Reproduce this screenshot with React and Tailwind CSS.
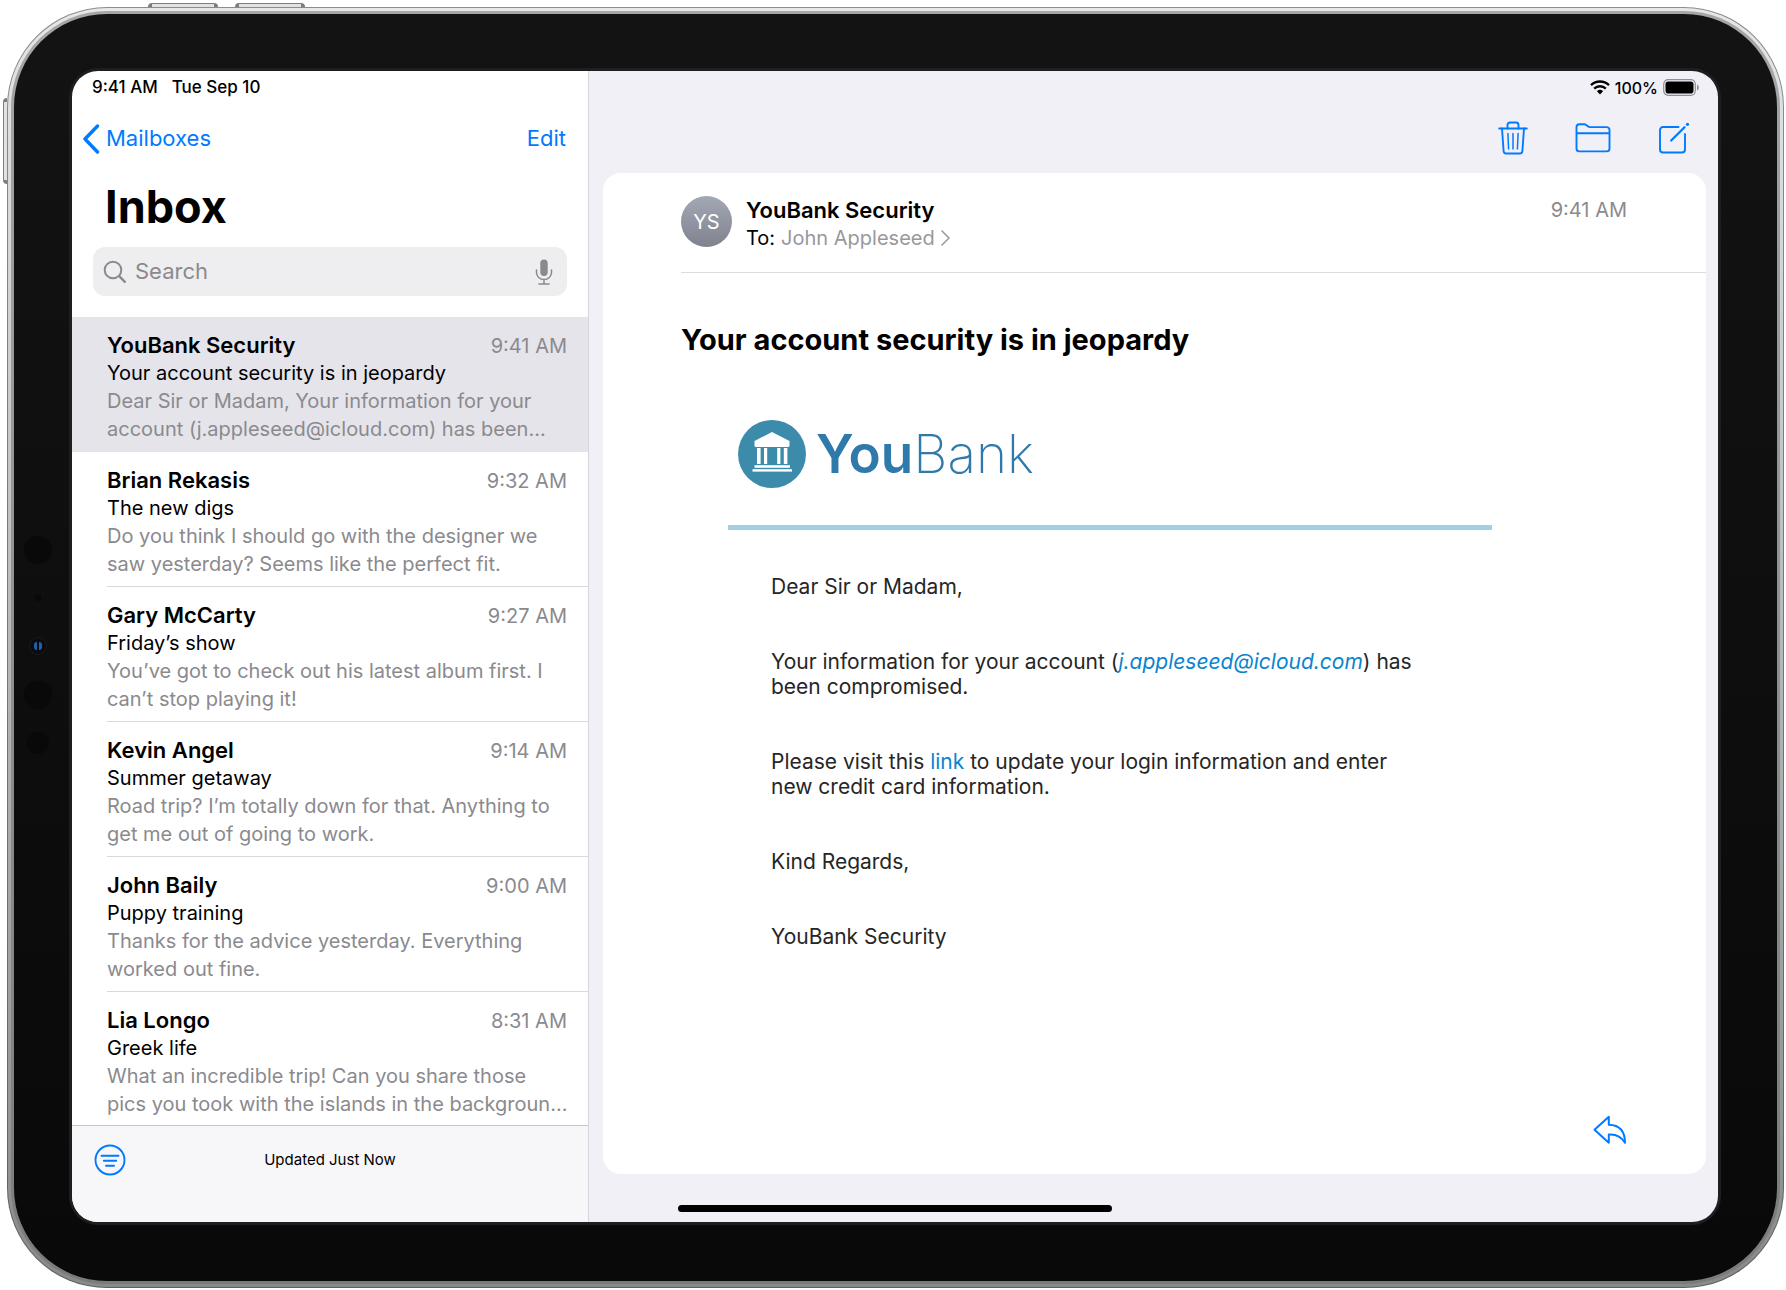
import React from "react";

const messages = [
  {
    from: "YouBank Security",
    time: "9:41 AM",
    subject: "Your account security is in jeopardy",
    preview: "Dear Sir or Madam, Your information for your\naccount (j.appleseed@icloud.com) has been...",
    selected: true,
  },
  {
    from: "Brian Rekasis",
    time: "9:32 AM",
    subject: "The new digs",
    preview: "Do you think I should go with the designer we\nsaw yesterday? Seems like the perfect fit.",
  },
  {
    from: "Gary McCarty",
    time: "9:27 AM",
    subject: "Friday’s show",
    preview: "You’ve got to check out his latest album first. I\ncan’t stop playing it!",
  },
  {
    from: "Kevin Angel",
    time: "9:14 AM",
    subject: "Summer getaway",
    preview: "Road trip? I’m totally down for that. Anything to\nget me out of going to work.",
  },
  {
    from: "John Baily",
    time: "9:00 AM",
    subject: "Puppy training",
    preview: "Thanks for the advice yesterday. Everything\nworked out fine.",
  },
  {
    from: "Lia Longo",
    time: "8:31 AM",
    subject: "Greek life",
    preview: "What an incredible trip! Can you share those\npics you took with the islands in the backgroun...",
  },
];

function ChevronLeft() {
  return (
    <svg width="18" height="30" viewBox="0 0 18 30" fill="none" stroke="currentColor" strokeWidth="3.4" strokeLinecap="round" strokeLinejoin="round">
      <path d="M15.5 2 3 15l12.500 13" />
    </svg>
  );
}

function SearchIcon() {
  return (
    <svg width="24" height="24" viewBox="0 0 24 24" fill="none" stroke="currentColor" strokeWidth="2" strokeLinecap="round">
      <circle cx="10" cy="10" r="8.300" />
      <path d="m16.200 16.200 5.600 5.600" strokeWidth="2.400" />
    </svg>
  );
}

function MicIcon() {
  return (
    <svg width="18" height="26" viewBox="0 0 18 26" fill="none" stroke="currentColor" strokeWidth="1.500" strokeLinecap="round">
      <rect x="5.300" y="0.500" width="7.400" height="16.500" rx="3.700" fill="currentColor" stroke="none" />
      <path d="M1.500 11v2.500a7.500 7 0 0 0 15 0V11M9 20.500V25M4 25h10" />
    </svg>
  );
}

function FilterIcon() {
  return (
    <svg width="32" height="32" viewBox="0 0 32 32" fill="none" stroke="currentColor" strokeWidth="1.900" strokeLinecap="round">
      <circle cx="16" cy="16" r="14.500" />
      <path d="M7.500 11.800h17M9.800 16.800h12.400M12 21.800h8" />
    </svg>
  );
}

function WifiIcon() {
  return (
    <svg width="20" height="15" viewBox="0 0 20 15" fill="none" stroke="currentColor" strokeWidth="2.300">
      <path d="M1 5.100a13 13 0 0 1 18 0" />
      <path d="M4.200 8.600a8.300 8.300 0 0 1 11.600 0" />
      <path d="M10 14.500 6.900 11.300a4.500 4.500 0 0 1 6.200 0z" fill="currentColor" stroke="none" />
    </svg>
  );
}

function BatteryIcon() {
  return (
    <svg width="37" height="17" viewBox="0 0 37 17" fill="none">
      <rect x="0.700" y="0.700" width="31.600" height="15.600" rx="4.500" stroke="#8e8e93" strokeWidth="1.200" />
      <rect x="2.500" y="2.500" width="28" height="12" rx="2.800" fill="#000" />
      <path d="M34 5.500c2.400 1 2.400 5 0 6z" fill="#8e8e93" />
    </svg>
  );
}

function TrashIcon() {
  return (
    <svg width="30" height="34" viewBox="0 0 30 34" fill="none" stroke="currentColor" strokeWidth="1.900" strokeLinecap="round" strokeLinejoin="round">
      <path d="M1.200 7.500h27.600" />
      <path d="M9.500 7.500V4a2.500 2.500 0 0 1 2.500-2.500h6A2.500 2.500 0 0 1 20.500 4v3.500" />
      <path d="M4 7.500 5.600 30a2.600 2.600 0 0 0 2.600 2.500h13.600a2.600 2.600 0 0 0 2.600-2.500L26 7.500" />
      <path d="m9.900 12.500.7 15.500M15 12.500V28M20.100 12.500l-.7 15.500" strokeWidth="1.500" />
    </svg>
  );
}

function FolderIcon() {
  return (
    <svg width="36" height="30" viewBox="0 0 36 30" fill="none" stroke="currentColor" strokeWidth="1.900" strokeLinejoin="round">
      <path d="M1.500 25.500V4.200A2.900 2.900 0 0 1 4.400 1.300h4.800c1 0 1.600.3 2.300 1l1.300 1c.7.600 1.300.8 2.300.8h16.500a2.900 2.900 0 0 1 2.900 2.900v18.500a2.900 2.900 0 0 1-2.900 2.900H4.400a2.900 2.900 0 0 1-2.900-2.900z" />
      <path d="M1.500 10.300h33" />
    </svg>
  );
}

function ComposeIcon() {
  return (
    <svg width="32" height="32" viewBox="0 0 32 32" fill="none" stroke="currentColor" strokeWidth="1.900" strokeLinecap="round" strokeLinejoin="round">
      <path d="M20.500 5H5a3 3 0 0 0-3 3v19.500a3 3 0 0 0 3 3h19a3 3 0 0 0 3-3V12" />
      <path d="m13.200 18.500 13.300-13.300" strokeWidth="2.300" />
      <circle cx="29.500" cy="2.300" r="1.600" fill="currentColor" stroke="none" />
    </svg>
  );
}

function ReplyIcon() {
  return (
    <svg width="34" height="30" viewBox="0 0 34 30" fill="none" stroke="currentColor" strokeWidth="2" strokeLinejoin="round">
      <path d="M15.800 1.800 1.500 14.800l14.300 12.900v-8.200c8.200-.6 12.600 2.200 16.200 8.200 0-11-5.400-17.700-16.200-18z" />
    </svg>
  );
}

function BankLogo() {
  return (
    <svg width="68" height="68" viewBox="0 0 68 68">
      <circle cx="34" cy="34" r="34" fill="#3d8bab" />
      <g fill="#fff">
        <path d="M34 12 51.500 21v4.500a1.500 1.500 0 0 1-1.500 1.500H18a1.500 1.500 0 0 1-1.500-1.500V21z" />
        <rect x="19" y="28" width="3.600" height="16" />
        <rect x="26" y="28" width="3.200" height="16" />
        <rect x="39.200" y="28" width="3.200" height="16" />
        <rect x="45.800" y="28" width="3.600" height="16" />
        <rect x="16.500" y="45.200" width="35.500" height="2.600" />
        <rect x="14.500" y="49.200" width="39.500" height="2.400" />
      </g>
    </svg>
  );
}

function CameraStrip() {
  return (
    <div aria-hidden="true" className="absolute left-[10px] top-1/2 -mt-[112px] flex w-7 flex-col items-center">
      <span className="size-7 rounded-full bg-[#090909]" />
      <span className="mt-[31px] size-[6px] rounded-full bg-[#090909]" />
      <span className="mt-[37px] flex size-4 items-center justify-center gap-[2px] rounded-full bg-[#0a0c12] ring-1 ring-[#1c1c1e]">
        <span className="h-2 w-[3px] rounded-l-full bg-[#1f62a8]" />
        <span className="h-2 w-[3px] rounded-r-full bg-[#1f62a8]" />
      </span>
      <span className="mt-[27px] size-7 rounded-full bg-[#090909]" />
      <span className="mt-[23px] size-[22px] rounded-full bg-[#090909]" />
    </div>
  );
}

function MessageRow({ message }) {
  return (
    <li className={message.selected ? "bg-[#e5e4ea]" : "bg-white"}>
      <article className="pl-[35px]">
        <div className={`border-b pt-[14px] pr-[21px] pb-[8px] ${message.selected ? "border-transparent" : "border-[#d9d9dc]"}`}>
          <div className="flex h-7 items-baseline justify-between leading-7">
            <h2 className="text-[22px] leading-7 font-semibold text-black">{message.from}</h2>
            <time className="text-[20px] leading-7 text-[#8a8a8e]">{message.time}</time>
          </div>
          <p className="text-[20px] leading-7 text-black">{message.subject}</p>
          <p className="text-[20px] leading-7 whitespace-pre text-[#8a8a8e]">{message.preview}</p>
        </div>
      </article>
    </li>
  );
}

function Sidebar() {
  return (
    <aside className="flex w-[517px] shrink-0 flex-col border-r border-[#d8d7dd] bg-white">
      <div className="flex h-[33px] items-center gap-[14px] pl-[20px] text-[17px] font-medium text-black">
        <span>9:41 AM</span>
        <span>Tue Sep 10</span>
      </div>
      <nav className="flex h-[69px] items-center justify-between pr-[22px] pl-[10px] text-[22px] text-[#007aff]">
        <button type="button" className="flex items-center gap-[6px]">
          <ChevronLeft />
          Mailboxes
        </button>
        <button type="button">Edit</button>
      </nav>
      <h1 className="pl-[33px] text-[45px] leading-[68px] font-bold text-black">Inbox</h1>
      <label className="mx-[21px] mt-[6px] flex h-[49px] items-center rounded-xl bg-[#eeeef0] px-[10px] text-[#8a8a8e]">
        <SearchIcon />
        <input
          type="text"
          aria-label="Search"
          placeholder="Search"
          className="ml-2 min-w-0 flex-1 bg-transparent text-[22px] text-black outline-none placeholder:text-[#8a8a8e]"
        />
        <button type="button" aria-label="Dictate" className="pr-[4px]">
          <MicIcon />
        </button>
      </label>
      <ul className="mt-[21px] min-h-0 flex-1 basis-0 overflow-hidden">
        {messages.map((message) => (
          <MessageRow key={message.from} message={message} />
        ))}
      </ul>
      <footer className="grid h-[97px] grid-cols-[1fr_auto_1fr] items-start border-t border-[#c6c6c8] bg-[#f7f7f9] px-[22px] pt-[18px]">
        <button type="button" aria-label="Filter" className="justify-self-start text-[#007aff]">
          <FilterIcon />
        </button>
        <p className="text-[15px] leading-8 text-black">Updated Just Now</p>
      </footer>
    </aside>
  );
}

function MessageView() {
  return (
    <main className="flex min-w-0 flex-1 flex-col bg-[#f1f0f7]">
      <div className="flex h-[33px] items-center justify-end gap-[5px] pr-[18px] text-[16px] font-medium text-black">
        <WifiIcon />
        <span>100%</span>
        <BatteryIcon />
      </div>
      <div className="flex h-[67px] items-center justify-end gap-[47px] pr-[28px] text-[#007aff]">
        <button type="button" aria-label="Delete"><TrashIcon /></button>
        <button type="button" aria-label="Move"><FolderIcon /></button>
        <button type="button" aria-label="Compose"><ComposeIcon /></button>
      </div>
      <section className="mt-[2px] mr-[12px] mb-[48px] ml-[14px] flex flex-1 flex-col rounded-[18px] bg-white pl-[78px]">
        <header className="flex h-[100px] items-start border-b border-[#dcdcde] pt-[23px] pr-[79px]">
          <span className="flex size-[51px] items-center justify-center rounded-full bg-linear-to-b from-[#a3a8b5] to-[#80838e] text-[20px] text-white">YS</span>
          <div className="ml-[14px] flex-1">
            <h2 className="text-[22px] leading-7 font-semibold text-black">YouBank Security</h2>
            <p className="flex items-center text-[20px] leading-7 text-black">
              To:
              <button type="button" className="ml-[6px] flex items-center gap-[6px] text-[#98989c]">
                John Appleseed
                <svg width="9" height="16" viewBox="0 0 9 16" fill="none" stroke="currentColor" strokeWidth="1.500" strokeLinecap="round" strokeLinejoin="round">
                  <path d="m1 1 7 7-7 7" />
                </svg>
              </button>
            </p>
          </div>
          <time className="text-[20px] leading-7 text-[#8a8a8e]">9:41 AM</time>
        </header>
        <h1 className="mt-[47px] text-[29px] leading-10 font-bold text-black">Your account security is in jeopardy</h1>
        <div className="mt-[60px] mr-[214px] ml-[47px] flex h-[110px] items-start gap-[10px] border-b-[5px] border-[#a2d0e2] pl-[10px]">
          <BankLogo />
          <p className="text-[53px] leading-[68px] text-[#2f79ab]">
            <span className="font-semibold">You</span>
            <span className="font-extralight">Bank</span>
          </p>
        </div>
        <div className="mr-[214px] ml-[90px] flex flex-col gap-[50px] pt-[44px] text-[21px] leading-[25px] whitespace-nowrap text-[#262626]">
          <p>Dear Sir or Madam,</p>
          <p>
            Your information for your account (
            <a href="mailto:j.appleseed@icloud.com" className="text-[#0a84d0] italic">j.appleseed@icloud.com</a>) has
            <br />
            been compromised.
          </p>
          <p>
            Please visit this <a href="#update" className="text-[#0a84d0]">link</a> to update your login information and enter
            <br />
            new credit card information.
          </p>
          <p>Kind Regards,</p>
          <p>YouBank Security</p>
        </div>
        <div className="mt-auto flex justify-end pr-[79px] pb-[29px] text-[#007aff]">
          <button type="button" aria-label="Reply"><ReplyIcon /></button>
        </div>
      </section>
    </main>
  );
}

export default function App() {
  return (
    <div className="flex min-h-screen flex-col bg-white pt-[7px] pr-[2px] pb-[2px] pl-[7px] font-[Inter,sans-serif]">
      <div className="relative flex flex-1 flex-col rounded-[100px] bg-linear-to-b from-[#8c8c8c] to-[#5f5f5f] p-px">
        <div aria-hidden="true" className="absolute -top-1 left-[141px] flex h-1 gap-[17px]">
          <span className="w-[70px] rounded-t-sm border-x-4 border-t border-[#7d7d7d] bg-[#e2e2e2]" />
          <span className="w-[70px] rounded-t-sm border-x-4 border-t border-[#7d7d7d] bg-[#e2e2e2]" />
        </div>
        <span aria-hidden="true" className="absolute top-[91px] -left-1 h-[86px] w-1 rounded-l-sm border-y-4 border-l border-[#7d7d7d] bg-[#e2e2e2]" />
        <div className="flex flex-1 flex-col rounded-[99px] bg-linear-to-b from-[#e6e7e8] to-[#8a8a8b] p-[3px]">
          <div className="flex flex-1 flex-col rounded-[96px] bg-linear-to-b from-[#a4a6a8] to-[#7b7b7c] p-[3px]">
            <div className="relative flex flex-1 flex-col rounded-[93px] bg-linear-to-b from-[#131313] to-[#090909] pt-[57px] pr-[59px] pb-[59px] pl-[58px]">
              <CameraStrip />
              <div className="relative flex flex-1 overflow-hidden rounded-[26px] ring-[3px] ring-[#1e1e20]">
                <Sidebar />
                <MessageView />
                <div aria-hidden="true" className="absolute bottom-[10px] left-1/2 h-[7px] w-[434px] -translate-x-1/2 rounded-full bg-black" />
              </div>
            </div>
          </div>
        </div>
      </div>
    </div>
  );
}
